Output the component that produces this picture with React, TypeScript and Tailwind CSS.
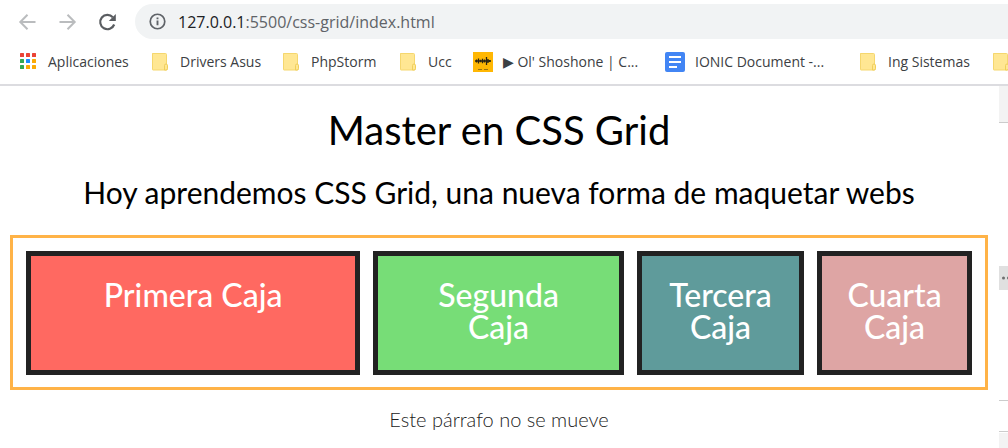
import type { ReactNode } from "react";

function Folder() {
  return (
    <svg viewBox="0 0 20 20" className="h-5 w-5" aria-hidden="true">
      <path d="M2.500 1.500h13a1 1 0 0 1 1 1v10l1 1v3a1.500 1.500 0 0 1-1.500 1.500h-13a.5.5 0 0 1-.5-.5v-15.500a.5.5 0 0 1 .5-.5z" fill="#ffe793" stroke="#f5d76e" />
      <path d="M14.500 18v-4.500a1.500 1.500 0 0 1 3 0v3a1.500 1.500 0 0 1-1.500 1.500z" fill="#ffe793" stroke="#f0ce5a" />
    </svg>
  );
}

const APP_COLORS = ["#ea4335", "#ea4335", "#ea4335", "#34a853", "#1a8cff", "#fbaa05", "#34a853", "#fbaa05", "#fbaa05"];

function Apps() {
  return (
    <svg viewBox="0 0 20 20" className="h-5 w-5" aria-hidden="true">
      {APP_COLORS.map((color, i) => (
        <rect key={i} x={2 + (i % 3) * 6} y={1 + Math.floor(i / 3) * 6} width="4" height="4" rx="0.500" fill={color} />
      ))}
    </svg>
  );
}

function Wave() {
  return (
    <svg viewBox="0 0 20 20" className="h-5 w-5" aria-hidden="true">
      <rect width="20" height="20" fill="#ffb703" />
      <path d="M2 9h16M3.500 7.500v3M5.500 6.500v5M7.500 7.800v2.400M9.500 6.800v4.400M11.500 7.500v3M13.500 5v8M15 7v4M16.500 8v2" stroke="#2b2413" strokeWidth="1.300" />
      <path d="M5 17.500h4M11 17.500h4" stroke="#9a7310" strokeWidth="1" />
    </svg>
  );
}

function Doc() {
  return (
    <svg viewBox="0 0 20 20" className="h-5 w-5" aria-hidden="true">
      <rect width="20" height="20" rx="2" fill="#4285f4" />
      <path d="M4 5h12M4 10h12M4 15h8" stroke="#fff" strokeWidth="2" />
    </svg>
  );
}

const bookmarks: { label: string; icon: ReactNode }[] = [
  { label: "Aplicaciones", icon: <Apps /> },
  { label: "Drivers Asus", icon: <Folder /> },
  { label: "PhpStorm", icon: <Folder /> },
  { label: "Ucc", icon: <Folder /> },
  { label: "▶ Ol' Shoshone | C...", icon: <Wave /> },
  { label: "IONIC Document -...", icon: <Doc /> },
  { label: "Ing Sistemas", icon: <Folder /> },
  { label: "", icon: <Folder /> },
];

function BrowserBar() {
  return (
    <header className="overflow-hidden border-b-2 border-[#dcdce0] pt-1 font-['Open_Sans','DejaVu_Sans',sans-serif]">
      <div className="flex items-center">
        <nav className="flex w-[135px] shrink-0 gap-5 pl-[17px]" aria-label="Historial">
          <button aria-label="Atrás" className="h-5 w-5 text-[#babcbe]">
            <svg viewBox="0 0 20 20" fill="none" stroke="currentColor" strokeWidth="2">
              <path d="M18.500 10H4M10.500 2.800 3.300 10l7.200 7.200" />
            </svg>
          </button>
          <button aria-label="Adelante" className="h-5 w-5 text-[#babcbe]">
            <svg viewBox="0 0 20 20" fill="none" stroke="currentColor" strokeWidth="2">
              <path d="M2.500 10H17M10.500 2.800l7.200 7.200-7.200 7.200" />
            </svg>
          </button>
          <button aria-label="Recargar" className="h-5 w-5 text-[#5a5d61]">
            <svg viewBox="0 0 20 20" fill="none" stroke="currentColor" strokeWidth="2.200">
              <path d="M17.200 12.500A7.200 7.200 0 1 1 15.800 5.200" />
              <path d="M18.800 2v7h-7z" fill="currentColor" stroke="none" />
            </svg>
          </button>
        </nav>
        <div className="flex h-[35px] flex-1 items-center rounded-l-full bg-[#f1f3f4] pl-[14px]">
          <svg viewBox="0 0 18 18" className="mr-3 h-[17px] w-[17px] text-[#5f6368]" aria-hidden="true">
            <circle cx="9" cy="9" r="7.700" fill="none" stroke="currentColor" strokeWidth="1.800" />
            <path d="M8 8h2v5H8zM8 4.700h2v2H8z" fill="currentColor" />
          </svg>
          <p className="text-base text-[#5f6368]">
            <span className="text-[#202124]">127.0.0.1</span>:5500/css-grid/index.html
          </p>
        </div>
      </div>
      <nav
        aria-label="Marcadores"
        className="grid h-[45px] grid-cols-[132px_131px_117px_75px_192px_193px_133px_30px] items-center pl-[18px]"
      >
        {bookmarks.map(({ label, icon }, i) => (
          <a key={i} href="#" aria-label={label || "Carpeta"} className="flex items-center gap-[10px] text-sm whitespace-nowrap text-[#3c4043]">
            {icon}
            {label}
          </a>
        ))}
      </nav>
    </header>
  );
}

function Box({ color, children }: { color: string; children: ReactNode }) {
  return (
    <div className={`border-5 border-[#222] px-5 pt-[23px] pb-[27px] text-center text-[32px] leading-8 font-medium text-white ${color}`}>
      {children}
    </div>
  );
}

export default function App() {
  return (
    <div className="flex min-h-screen flex-col bg-white">
      <BrowserBar />
      <div className="flex flex-1">
        <main className="flex-1 pr-[11px] pl-[10px] text-center font-[Lato,sans-serif] text-black">
          <h1 className="pt-[19px] text-[40px] leading-[50px]">Master en CSS Grid</h1>
          <h2 className="pt-[19px] text-[30px] leading-9">Hoy aprendemos CSS Grid, una nueva forma de maquetar webs</h2>
          <section className="mt-[25px] grid grid-cols-[2fr_1.5fr_1fr_155px] gap-[13px] border-3 border-[#ffb347] p-[13px] pb-3">
            <Box color="bg-[#ff6961]">Primera Caja</Box>
            <Box color="bg-[#77dd77]">Segunda<br />Caja</Box>
            <Box color="bg-[#5f9b9b]">Tercera<br />Caja</Box>
            <Box color="bg-[#dea5a4]">Cuarta<br />Caja</Box>
          </section>
          <p className="mt-[17px] text-[20px] leading-6 font-light text-[#222]">Este párrafo no se mueve</p>
        </main>
        <aside className="flex w-[9px] shrink-0 flex-col" aria-label="Panel lateral">
          <div className="h-[37px] border-b border-[#ccc] bg-[#f3f3f3]" />
          <div className="mt-[143px] flex h-6 items-center overflow-hidden bg-[#e0e0e0] pl-[3px]">
            <svg viewBox="0 0 6 4" className="h-1 w-[6px]" fill="#6e6e6e" aria-hidden="true">
              <circle cx="1.500" cy="2" r="1.500" />
              <circle cx="6.500" cy="2" r="1.500" />
            </svg>
          </div>
          <div className="h-[111px] border-b border-[#ccc]" />
          <div className="h-[31px] border-b border-[#ccc]" />
          <div className="mt-px flex-1 bg-[#f3f3f3]" />
        </aside>
      </div>
    </div>
  );
}
